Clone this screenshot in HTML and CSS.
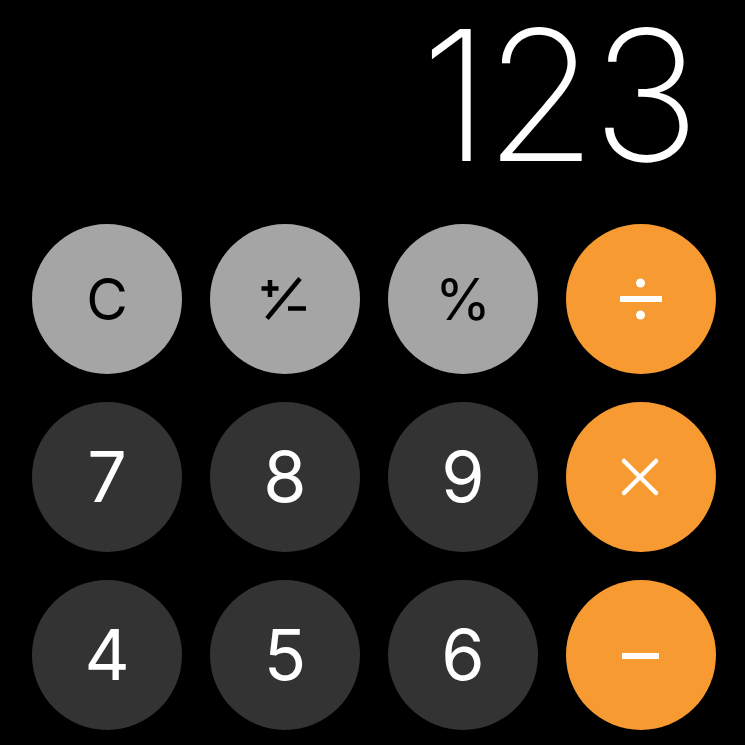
FILE: index.html
```html
<!DOCTYPE html>
<html>
<head>
<meta charset="utf-8">
<link rel="stylesheet" href="styles.css">
</head>
<body>
<main class="calc">
  <div class="display">123</div>
  <div class="keys">
    <div class="key light"><span class="lbl-sm">C</span></div>
    <div class="key light">
      <svg class="ico" width="60" height="60" viewBox="0 0 60 60">
        <g stroke="#000" stroke-width="4.5" fill="none">
          <line x1="6.5" y1="19.5" x2="23.5" y2="19.5"/>
          <line x1="15" y1="11" x2="15" y2="28"/>
          <line x1="45" y1="9.5" x2="12" y2="49.5"/>
          <line x1="33" y1="39.5" x2="51" y2="39.5"/>
        </g>
      </svg>
    </div>
    <div class="key light"><span class="lbl-sm">%</span></div>
    <div class="key orange">
      <svg class="ico" width="60" height="60" viewBox="0 0 60 60">
        <rect x="9" y="27" width="42" height="6" fill="#fff"/>
        <circle cx="29.5" cy="14" r="4.5" fill="#fff"/>
        <circle cx="29.5" cy="46" r="4.5" fill="#fff"/>
      </svg>
    </div>

    <div class="key dark"><span class="lbl">7</span></div>
    <div class="key dark"><span class="lbl">8</span></div>
    <div class="key dark"><span class="lbl">9</span></div>
    <div class="key orange">
      <svg class="ico" width="60" height="60" viewBox="0 0 60 60">
        <g stroke="#fff" stroke-width="4.5" stroke-linecap="round">
          <line x1="13" y1="14" x2="45" y2="46"/>
          <line x1="45" y1="14" x2="13" y2="46"/>
        </g>
      </svg>
    </div>

    <div class="key dark"><span class="lbl">4</span></div>
    <div class="key dark"><span class="lbl">5</span></div>
    <div class="key dark"><span class="lbl">6</span></div>
    <div class="key orange">
      <svg class="ico" width="60" height="60" viewBox="0 0 60 60">
        <rect x="11" y="28" width="37" height="6" fill="#fff"/>
      </svg>
    </div>
  </div>
</main>
</body>
</html>
```

FILE: styles.css
```css
html, body {
  margin: 0;
  padding: 0;
  background: #000;
  height: 100%;
  overflow: hidden;
}

.calc {
  width: 745px;
  height: 745px;
  display: flex;
  flex-direction: column;
  font-family: Inter, "Liberation Sans", sans-serif;
}

.display {
  height: 224px;
  box-sizing: border-box;
  padding-right: 50px;
  text-align: right;
  color: #fff;
  font-weight: 220;
  font-size: 182px;
  line-height: 190px;
  letter-spacing: -5px;
}

.keys {
  display: grid;
  grid-template-columns: repeat(4, 150px);
  grid-auto-rows: 150px;
  gap: 28px;
  padding-left: 32px;
}

.key {
  width: 150px;
  height: 150px;
  border-radius: 50%;
  display: flex;
  align-items: center;
  justify-content: center;
}

.light { background: #a5a5a5; color: #000; }
.dark { background: #333333; color: #fff; }
.orange { background: #f79a31; color: #fff; }

.lbl {
  font-size: 70px;
  font-weight: 400;
  line-height: 1;
}

.lbl-sm {
  font-size: 57px;
  font-weight: 400;
  line-height: 1;
}

.ico {
  display: block;
}
```
